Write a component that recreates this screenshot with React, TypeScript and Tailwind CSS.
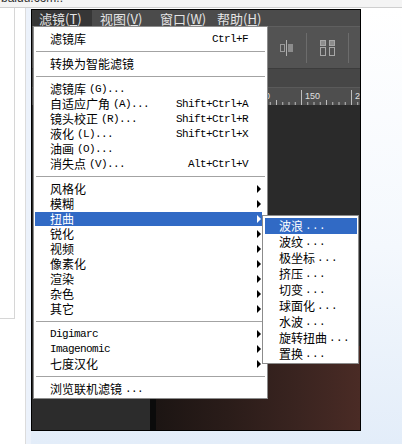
import React from 'react'

const cjk = "font-['Noto_Sans_CJK_SC',sans-serif]"
const mono = "font-['Liberation_Mono','Noto_Sans_CJK_SC',monospace]"

type Item = {
    cn?: string
    en?: string
    sc?: string
    sub?: boolean
    active?: boolean
}

const menuGroups: Item[][] = [
    [{ cn: '滤镜库', sc: 'Ctrl+F' }],
    [{ cn: '转换为智能滤镜' }],
    [
        { cn: '滤镜库', en: '(G)...' },
        { cn: '自适应广角', en: '(A)...', sc: 'Shift+Ctrl+A' },
        { cn: '镜头校正', en: '(R)...', sc: 'Shift+Ctrl+R' },
        { cn: '液化', en: '(L)...', sc: 'Shift+Ctrl+X' },
        { cn: '油画', en: '(O)...' },
        { cn: '消失点', en: '(V)...', sc: 'Alt+Ctrl+V' },
    ],
    [
        { cn: '风格化', sub: true },
        { cn: '模糊', sub: true },
        { cn: '扭曲', sub: true, active: true },
        { cn: '锐化', sub: true },
        { cn: '视频', sub: true },
        { cn: '像素化', sub: true },
        { cn: '渲染', sub: true },
        { cn: '杂色', sub: true },
        { cn: '其它', sub: true },
    ],
    [
        { en: 'Digimarc', sub: true },
        { en: 'Imagenomic', sub: true },
        { cn: '七度汉化', sub: true },
    ],
    [{ cn: '浏览联机滤镜', en: '...' }],
]

const subItems = ['波浪', '波纹', '极坐标', '挤压', '切变', '球面化', '水波', '旋转扭曲', '置换']

const menuBar = [
    { cn: '滤镜', key: 'T' },
    { cn: '视图', key: 'V' },
    { cn: '窗口', key: 'W' },
    { cn: '帮助', key: 'H' },
]

function Arrow({ white }: { white?: boolean }) {
    return (
        <svg width="5" height="8" viewBox="0 0 5 8">
            <path d="M0 0 L4 4 L0 8 Z" fill={white ? '#ffffff' : '#000000'} />
        </svg>
    )
}

function Label({ item }: { item: Item }) {
    return (
        <span className="flex flex-1 items-center whitespace-nowrap">
            {item.cn && (
                <span className={`${cjk} inline-block h-[14px] text-[12px] leading-[14px]`}>{item.cn}</span>
            )}
            {item.en && (
                <span
                    className={`${mono} inline-block h-[14px] text-[11px] leading-[14px] tracking-[-0.6px] ${
                        item.cn ? 'ml-[3px]' : ''
                    }`}
                >
                    {item.en}
                </span>
            )}
        </span>
    )
}

function MenuRow({ item }: { item: Item }) {
    return (
        <div
            className={`my-[1px] ml-[1px] mr-[5px] flex h-[14px] items-center pl-[15px] ${
                item.active ? 'bg-[#316ac5] text-white' : 'text-black'
            }`}
        >
            <Label item={item} />
            {item.sc && (
                <span className={`${mono} inline-block h-[14px] text-[11px] leading-[14px] tracking-[-0.6px]`}>
                    {item.sc}
                </span>
            )}
            <span className="flex h-full w-[14px] items-center pl-[9px]">
                {item.sub && <Arrow white={item.active} />}
            </span>
        </div>
    )
}

function Separator() {
    return (
        <div className="mx-[2px] py-[4px]">
            <div className="h-[1px] bg-[#a3a3a3]" />
        </div>
    )
}

function AlignIcon() {
    return (
        <svg width="14" height="16" viewBox="0 0 14 16">
            <rect x="0.5" y="4.5" width="4" height="7" fill="none" stroke="#9a9a9a" />
            <line x1="6.5" y1="0" x2="6.5" y2="16" stroke="#b0b0b0" />
            <rect x="8" y="4" width="5" height="8" fill="#8c8c8c" />
        </svg>
    )
}

function DistributeIcon() {
    return (
        <svg width="16" height="16" viewBox="0 0 16 16">
            <rect x="0.5" y="0.5" width="5" height="5" fill="#8c8c8c" stroke="#a8a8a8" />
            <rect x="0.5" y="7.5" width="5" height="8" fill="none" stroke="#a8a8a8" />
            <rect x="9.5" y="0.5" width="5" height="5" fill="#8c8c8c" stroke="#a8a8a8" />
            <rect x="9.5" y="7.5" width="5" height="8" fill="none" stroke="#a8a8a8" />
        </svg>
    )
}

function Ruler() {
    const ticks = []
    for (let i = 0; i < 60; i++) {
        const x = 19.5 + i * 6.25
        const big = i % 8 === 0
        const mid = i % 4 === 0
        ticks.push(
            <line
                key={i}
                x1={x}
                x2={x}
                y1={big ? 2 : mid ? 12 : 14}
                y2={18}
                stroke="#bdbdbd"
                strokeWidth="1"
            />
        )
    }
    return (
        <svg width="328" height="18" className="block">
            {ticks}
            <text x="223" y="11" fontSize="9" fill="#e0e0e0" fontFamily="Liberation Sans, sans-serif">
                100
            </text>
            <text x="273" y="11" fontSize="9" fill="#e0e0e0" fontFamily="Liberation Sans, sans-serif">
                150
            </text>
            <text x="323" y="11" fontSize="9" fill="#e0e0e0" fontFamily="Liberation Sans, sans-serif">
                200
            </text>
        </svg>
    )
}

export default function App() {
    return (
        <div className="flex h-[444px] w-[402px] flex-col overflow-hidden bg-white">
            <div className="h-[13px] overflow-hidden border-b border-[#cfcfcf] bg-[#f4f4f4] pl-[1px]">
                <div className="-mt-[9px] font-['Liberation_Sans',sans-serif] text-[12px] leading-[14px] text-[#333]">
                    baidu.com..
                </div>
            </div>

            <div className="flex flex-1">
                <div className="w-[15px]">
                    <div className="h-[311px] border-b border-r border-[#d6d6d6]" />
                </div>
                <div className="w-[11px] border-r border-[#dcdcdc]" />

                <div className="flex flex-1 flex-col bg-[linear-gradient(to_bottom,#ffffff_0%,#f4f8fd_55%,#e3edf9_100%)]">
                    <div className="flex">
                        <div className="h-[436px] w-[5px] bg-[#ecf2fb]" />

                        <div className="relative mt-[1px] flex h-[422px] w-[330px] flex-col overflow-hidden border border-black bg-[#2a2a2a]">
                            <div className="flex h-[16px] bg-[#4b4b4b]">
                                {menuBar.map((m, i) => (
                                    <div
                                        key={m.key}
                                        className={`flex w-[60px] items-center whitespace-nowrap ${cjk} text-[13px] leading-none text-[#e4e4e4] ${
                                            i === 0 ? 'bg-[#363636] pl-[7px]' : i === 3 ? 'pl-[5px]' : 'pl-[8px]'
                                        }`}
                                    >
                                        {m.cn}(<span className="underline">{m.key}</span>)
                                    </div>
                                ))}
                            </div>

                            <div className="flex h-[42px] items-center border-t border-[#5f5f5f] bg-[#535353] pl-[248px]">
                                <AlignIcon />
                                <div className="ml-[12px] h-[30px] w-[1px] bg-[#6c6c6c]" />
                                <div className="ml-[13px]">
                                    <DistributeIcon />
                                </div>
                                <div className="ml-[12px] h-[30px] w-[1px] bg-[#6c6c6c]" />
                            </div>

                            <div className="h-[19px] border-t border-[#3c3c3c] bg-[#464646]" />

                            <div className="h-[18px] border-t border-[#5a5a5a] bg-[#4e4e4e]">
                                <Ruler />
                            </div>

                            <div className="flex flex-1 flex-col justify-end bg-[#2a2a2a]">
                                <div className="flex h-[84px]">
                                    <div className="w-[118px] bg-[#2c2c2c]" />
                                    <div className="w-[6px] bg-[#0b0b0b]" />
                                    <div className="flex-1 bg-[linear-gradient(90deg,#1c1513_0%,#2a1c19_35%,#3a2420_70%,#4a2b25_100%)]" />
                                </div>
                            </div>

                            <div className="absolute left-[1px] top-[16px] w-[235px] border border-[#8c8c8c] bg-white pb-[1px] pt-[4px]">
                                {menuGroups.map((group, gi) => (
                                    <div key={gi}>
                                        {gi > 0 && <Separator />}
                                        {group.map((item, ii) => (
                                            <MenuRow key={ii} item={item} />
                                        ))}
                                    </div>
                                ))}
                            </div>

                            <div className="absolute left-[230px] top-[205px] w-[97px] border border-[#8c8c8c] bg-white pb-[1px] pt-[2px]">
                                {subItems.map((s, i) => (
                                    <div
                                        key={s}
                                        className={`ml-[2px] mr-[1px] flex h-[16px] items-center whitespace-nowrap pl-[14px] ${
                                            i === 0 ? 'bg-[#316ac5] text-white' : 'text-black'
                                        }`}
                                    >
                                        <span className={`${cjk} inline-block h-[14px] text-[12px] leading-[14px]`}>{s}</span>
                                        <span
                                            className={`${mono} ml-[2px] inline-block h-[14px] text-[11px] leading-[14px] tracking-[0.4px]`}
                                        >
                                            ...
                                        </span>
                                    </div>
                                ))}
                            </div>
                        </div>

                        <div className="flex-1" />
                    </div>
                </div>
            </div>
        </div>
    )
}
